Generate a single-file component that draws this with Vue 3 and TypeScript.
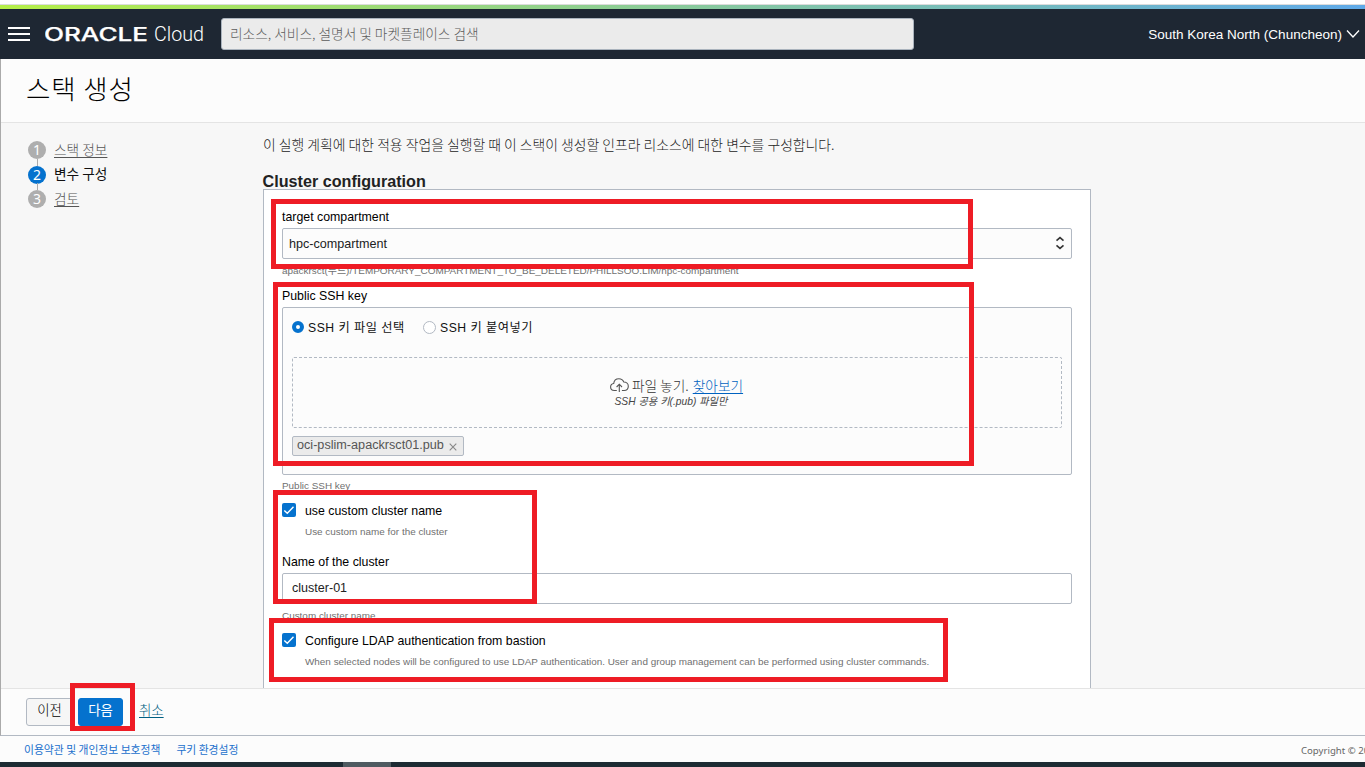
<script setup lang="ts">
interface Step {
  id: number
  label: string
  active: boolean
}

const steps: Step[] = [
  { id: 1, label: '스택 정보', active: false },
  { id: 2, label: '변수 구성', active: true },
  { id: 3, label: '검토', active: false },
]

const highlights: string[] = ['compartment', 'ssh', 'cluster', 'ldap', 'next']
</script>

<template>
  <div class="screen">
    <div class="strip"></div>
    <header class="topbar">
      <svg class="burger" width="22" height="14" viewBox="0 0 22 14">
        <path d="M0 1h22M0 7h22M0 13h22" stroke="#fff" stroke-width="2" />
      </svg>
      <svg class="logo" width="160" height="24" viewBox="0 0 160 24">
        <text class="oracle" x="-1" y="18.5" textLength="104" lengthAdjust="spacingAndGlyphs">ORACLE</text>
        <text class="cloud" x="109" y="18.5" textLength="50" lengthAdjust="spacingAndGlyphs">Cloud</text>
      </svg>
      <div class="search">리소스, 서비스, 설명서 및 마켓플레이스 검색</div>
      <div class="region">
        <span>South Korea North (Chuncheon)</span>
        <svg width="14" height="10" viewBox="0 0 14 10">
          <path d="M1 1.5l6 6.5 6-6.5" fill="none" stroke="#fff" stroke-width="1.3" />
        </svg>
      </div>
    </header>

    <div class="page">
      <div class="titlebar"><h1>스택 생성</h1></div>
      <div class="body">
        <nav class="steps">
          <div v-for="s in steps" :key="s.id" class="step" :class="{ active: s.active }">
            <span class="num">{{ s.id }}</span>
            <span class="step-label">{{ s.label }}</span>
          </div>
        </nav>
        <main class="content">
          <p class="intro">이 실행 계획에 대한 적용 작업을 실행할 때 이 스택이 생성할 인프라 리소스에 대한 변수를 구성합니다.</p>
          <h2>Cluster configuration</h2>
          <section class="card">
            <div class="label">target compartment</div>
            <div class="select">
              <span>hpc-compartment</span>
              <svg width="10" height="14" viewBox="0 0 10 14">
                <path d="M1.5 4.6L5 1.6l3.5 3M1.5 9.4L5 12.4l3.5-3" fill="none" stroke="#333" stroke-width="1.6" />
              </svg>
            </div>
            <div class="hint path">apackrsct(루트)/TEMPORARY_COMPARTMENT_TO_BE_DELETED/PHILLSOO.LIM/hpc-compartment</div>

            <div class="label key-label">Public SSH key</div>
            <div class="keybox">
              <div class="radios">
                <span class="radio on"></span><span class="radio-text first">SSH 키 파일 선택</span>
                <span class="radio"></span><span class="radio-text second">SSH 키 붙여넣기</span>
              </div>
              <div class="drop">
                <div class="drop-line">
                  <svg width="19" height="15" viewBox="0 0 19 15" fill="none" stroke="#555" stroke-width="1.1">
                    <path d="M6.8 12.5H4.3C2.2 12.5.6 11 .6 9c0-1.9 1.3-3.3 3.1-3.5C4 2.7 6.2.7 8.9.7c2.3 0 4.1 1.3 4.9 3.3 2.5 0 4.5 1.8 4.5 4.3 0 2.4-1.8 4.2-4.2 4.2h-2.2" />
                    <path d="M9.3 14V6.3M6.6 9l2.7-2.8L12 9" />
                  </svg>
                  <span class="drop-text">파일 놓기.</span>
                  <span class="browse">찾아보기</span>
                </div>
                <div class="drop-note">SSH 공용 키(.pub) 파일만</div>
              </div>
              <div class="chip">
                <span>oci-pslim-apackrsct01.pub</span>
                <svg width="8" height="8" viewBox="0 0 8 8"><path d="M.7.7l6.6 6.6M7.3.7L.7 7.3" stroke="#888" stroke-width="1.1" /></svg>
              </div>
            </div>
            <div class="hint key-hint">Public SSH key</div>

            <div class="check-row first-check">
              <svg width="14" height="14" viewBox="0 0 14 14"><rect width="14" height="14" rx="2" fill="#0572ce" /><path d="M2.3 7.4l3 2.9 6.2-6.5" fill="none" stroke="#fff" stroke-width="1.4" /></svg>
              <span>use custom cluster name</span>
            </div>
            <div class="hint indent">Use custom name for the cluster</div>

            <div class="label name-label">Name of the cluster</div>
            <div class="input">cluster-01</div>
            <div class="hint name-hint">Custom cluster name</div>

            <div class="check-row second-check">
              <svg width="14" height="14" viewBox="0 0 14 14"><rect width="14" height="14" rx="2" fill="#0572ce" /><path d="M2.3 7.4l3 2.9 6.2-6.5" fill="none" stroke="#fff" stroke-width="1.4" /></svg>
              <span>Configure LDAP authentication from bastion</span>
            </div>
            <div class="hint indent">When selected nodes will be configured to use LDAP authentication. User and group management can be performed using cluster commands.</div>
          </section>
        </main>
      </div>
      <div class="actions">
        <span class="btn">이전</span>
        <span class="btn primary">다음</span>
        <span class="cancel">취소</span>
      </div>
    </div>

    <footer class="footer">
      <span class="terms">이용약관 및 개인정보 보호정책</span>
      <span class="cookies">쿠키 환경설정</span>
      <span class="copyright">Copyright © 20</span>
    </footer>
    <div class="taskbar"><i></i></div>

    <div v-for="h in highlights" :key="h" class="mark" :class="h"></div>
  </div>
</template>

<style>
body {
  margin: 0;
  overflow: hidden;
}
</style>

<style scoped>
* {
  box-sizing: border-box;
}
.screen {
  position: relative;
  display: flex;
  flex-direction: column;
  width: 1365px;
  height: 767px;
  overflow: hidden;
  background: #fff;
  color: #222;
  white-space: nowrap;
  font-family: "Liberation Sans", "Noto Sans CJK KR", sans-serif;
}
.strip {
  flex: none;
  height: 5px;
  margin-bottom: 4px;
  border-bottom: 1px solid #dcdcdc;
}
.strip::after {
  content: "";
  display: block;
  height: 4px;
  margin-top: 5px;
  background: linear-gradient(90deg, #b5ef48, #7bbfb4 65%, #76bcb9 72%, #5fa9e8);
}
.topbar {
  flex: none;
  display: flex;
  align-items: center;
  height: 50px;
  padding-left: 8px;
  background: #1e2733;
}
.logo {
  margin: 0 16px 0 15px;
}
.oracle {
  font: 500 18px Inter, sans-serif;
  fill: #fff;
  stroke: #fff;
  stroke-width: 0.25px;
}
.cloud {
  font: 300 19.5px Roboto, sans-serif;
  fill: #fff;
}
.search {
  width: 693px;
  height: 32px;
  padding-left: 8px;
  border: 1px solid #aab3bd;
  border-radius: 3px;
  background: #ebebeb;
  color: #5c5c5c;
  font: 300 13.7px/29px "Noto Sans CJK KR", sans-serif;
}
.region {
  display: flex;
  align-items: center;
  gap: 4px;
  margin-left: auto;
  padding-right: 5px;
  color: #fff;
  font-size: 13.53px;
}
.page {
  flex: none;
  display: flex;
  flex-direction: column;
  height: 677px;
  border-left: 1px solid #aaa;
  border-bottom: 1px solid #b2b9c3;
  background: #fcfcfc;
}
.titlebar {
  flex: none;
  height: 64px;
  padding-left: 25px;
  border-bottom: 1px solid #e4e4e4;
}
h1 {
  margin: 0;
  color: #000;
  font: 300 26.5px/58px "Noto Sans CJK KR", sans-serif;
  letter-spacing: 0.9px;
}
.body {
  flex: none;
  display: flex;
  height: 565px;
  overflow: hidden;
  background: #f7f7f7;
}
.steps {
  width: 261px;
  padding: 15px 0 0 27px;
}
.step {
  display: flex;
  align-items: center;
  height: 24.5px;
  color: #555;
  font: 300 13.7px/20px "Noto Sans CJK KR", sans-serif;
}
.num {
  position: relative;
  width: 18px;
  height: 18px;
  margin-right: 8px;
  border-radius: 50%;
  background: #aeaeae;
  color: #fff;
  font: 14px/18px "Noto Sans", sans-serif;
  text-align: center;
}
.step + .step .num::before {
  content: "";
  position: absolute;
  left: 8.5px;
  top: -7px;
  width: 1px;
  height: 7px;
  background: #aaa;
}
.step-label {
  margin-top: -3px;
  text-decoration: underline;
  text-decoration-thickness: 1px;
  text-underline-offset: 2px;
}
.active {
  color: #111;
  font-weight: 400;
}
.active .num {
  background: #0572ce;
}
.active .step-label {
  text-decoration: none;
}
.content {
  width: 829px;
}
.intro {
  height: 50px;
  margin: 0 0 0 1px;
  color: #1c1c1c;
  font: 300 13.85px/43px "Noto Sans CJK KR", sans-serif;
}
h2 {
  height: 16px;
  margin: 0;
  padding-left: 0.6px;
  font-size: 16.15px;
  line-height: 16px;
}
.card {
  width: 828px;
  height: 560px;
  margin-left: 1px;
  padding: 19px 18px 0;
  border: 1px solid #b2b9c3;
  background: #fff;
}
.label {
  height: 16px;
  margin-bottom: 3px;
  color: #000;
  font-size: 12.35px;
  line-height: 16px;
}
.select {
  display: flex;
  align-items: center;
  justify-content: space-between;
  height: 31px;
  padding: 0 6px;
  border: 1px solid #b2b9c3;
  border-radius: 2px;
  background: #fcfcfc;
  font-size: 12.6px;
}
.select svg {
  margin-top: -2px;
}
.hint {
  height: 12px;
  color: #707070;
  font-size: 9.91px;
  line-height: 12px;
}
.path {
  margin-top: 6px;
  font-size: 9.95px;
}
.key-label {
  margin-top: 11px;
}
.keybox {
  height: 168px;
  padding: 11px 9px 0;
  border: 1px solid #b2b9c3;
  border-radius: 2px;
  background: #fcfcfc;
}
.radios {
  display: flex;
  align-items: center;
  height: 16px;
  color: #111;
  font-size: 12.2px;
}
.radio {
  width: 13px;
  height: 13px;
  border: 1px solid #b2b9c3;
  border-radius: 50%;
  background: #fff;
}
.radio.on {
  width: 12px;
  height: 12px;
  border: 4px solid #0572ce;
}
.radio-text {
  margin-left: 4px;
  letter-spacing: 0.5px;
}
.radio-text.first {
  width: 115px;
}
.drop {
  display: flex;
  flex-direction: column;
  align-items: center;
  height: 71px;
  margin-top: 22px;
  padding-top: 18px;
  border: 1px dashed #b2b9c3;
  border-radius: 2px;
  color: #333;
}
.drop-line {
  display: flex;
  align-items: center;
  height: 18px;
  margin-left: -1px;
  font: 300 13.7px/18px "Noto Sans CJK KR", sans-serif;
}
.drop-text {
  margin: 0 4px 0 3px;
}
.browse {
  color: #0062c0;
  text-decoration: underline;
  text-decoration-thickness: 1px;
  text-underline-offset: 2px;
}
.drop-note {
  margin: 1px 0 0 -12px;
  color: #444;
  font-size: 10.25px;
  font-style: italic;
  line-height: 14px;
}
.chip {
  display: flex;
  align-items: center;
  width: 172px;
  height: 20px;
  margin-top: 8px;
  padding-left: 4px;
  border: 1px solid #b2b9c3;
  border-radius: 2px;
  background: #ebebeb;
  color: #555;
  font-size: 12.65px;
  line-height: 16px;
}
.chip span {
  margin-top: -3px;
}
.chip svg {
  margin: 2px 0 0 5px;
}
.key-hint {
  margin-top: 5px;
}
.check-row {
  display: flex;
  align-items: center;
  gap: 9px;
  height: 14px;
  margin-bottom: 9px;
  color: #000;
  font-size: 12.35px;
}
.check-row span {
  padding-top: 2px;
}
.first-check {
  margin-top: 11px;
}
.indent {
  margin-left: 23px;
}
.name-label {
  margin-top: 16px;
}
.input {
  height: 31px;
  padding-left: 9px;
  border: 1px solid #b2b9c3;
  border-radius: 2px;
  font-size: 12.55px;
  line-height: 28px;
}
.name-hint {
  margin-top: 6px;
}
.second-check {
  margin-top: 11px;
}
.actions {
  display: flex;
  height: 47px;
  padding: 9px 0 0 25px;
  border-top: 1px solid #e4e4e4;
}
.btn,
.cancel {
  height: 28px;
  font: 300 13.4px/20px "Noto Sans CJK KR", sans-serif;
}
.btn {
  width: 47px;
  border: 1px solid #b2b9c3;
  border-radius: 3px;
  background: #f6f6f6;
  color: #000;
  text-align: center;
}
.primary {
  width: 45px;
  margin: 0 16px 0 5px;
  border-color: #0572ce;
  background: #0572ce;
  color: #fff;
  font-weight: 400;
}
.cancel {
  color: #005f82;
  line-height: 22px;
  text-decoration: underline;
  text-decoration-thickness: 1px;
  text-underline-offset: 2px;
}
.footer {
  flex: none;
  display: flex;
  height: 26px;
  padding-left: 24px;
  background: #fcfcfc;
  color: #1a70cc;
  font: 400 10.8px/26px "Noto Sans CJK KR", sans-serif;
}
.cookies {
  margin-left: 16px;
}
.copyright {
  width: 64px;
  margin-left: auto;
  color: #666;
  font: 9.6px/29px "Noto Sans", sans-serif;
}
.taskbar {
  flex: none;
  height: 5px;
  padding-left: 343px;
  background: #1d2b33;
}
.taskbar i {
  display: block;
  width: 48px;
  height: 5px;
  background: #4f5b61;
}
.mark {
  position: absolute;
  border: 5px solid #ee1c25;
}
.compartment {
  left: 271px;
  top: 199px;
  width: 702px;
  height: 70px;
}
.ssh {
  left: 273px;
  top: 282px;
  width: 701px;
  height: 184px;
}
.cluster {
  left: 273px;
  top: 490px;
  width: 264px;
  height: 114px;
}
.ldap {
  left: 269px;
  top: 618px;
  width: 679px;
  height: 64px;
}
.next {
  left: 70px;
  top: 683px;
  width: 65px;
  height: 48px;
}
</style>
